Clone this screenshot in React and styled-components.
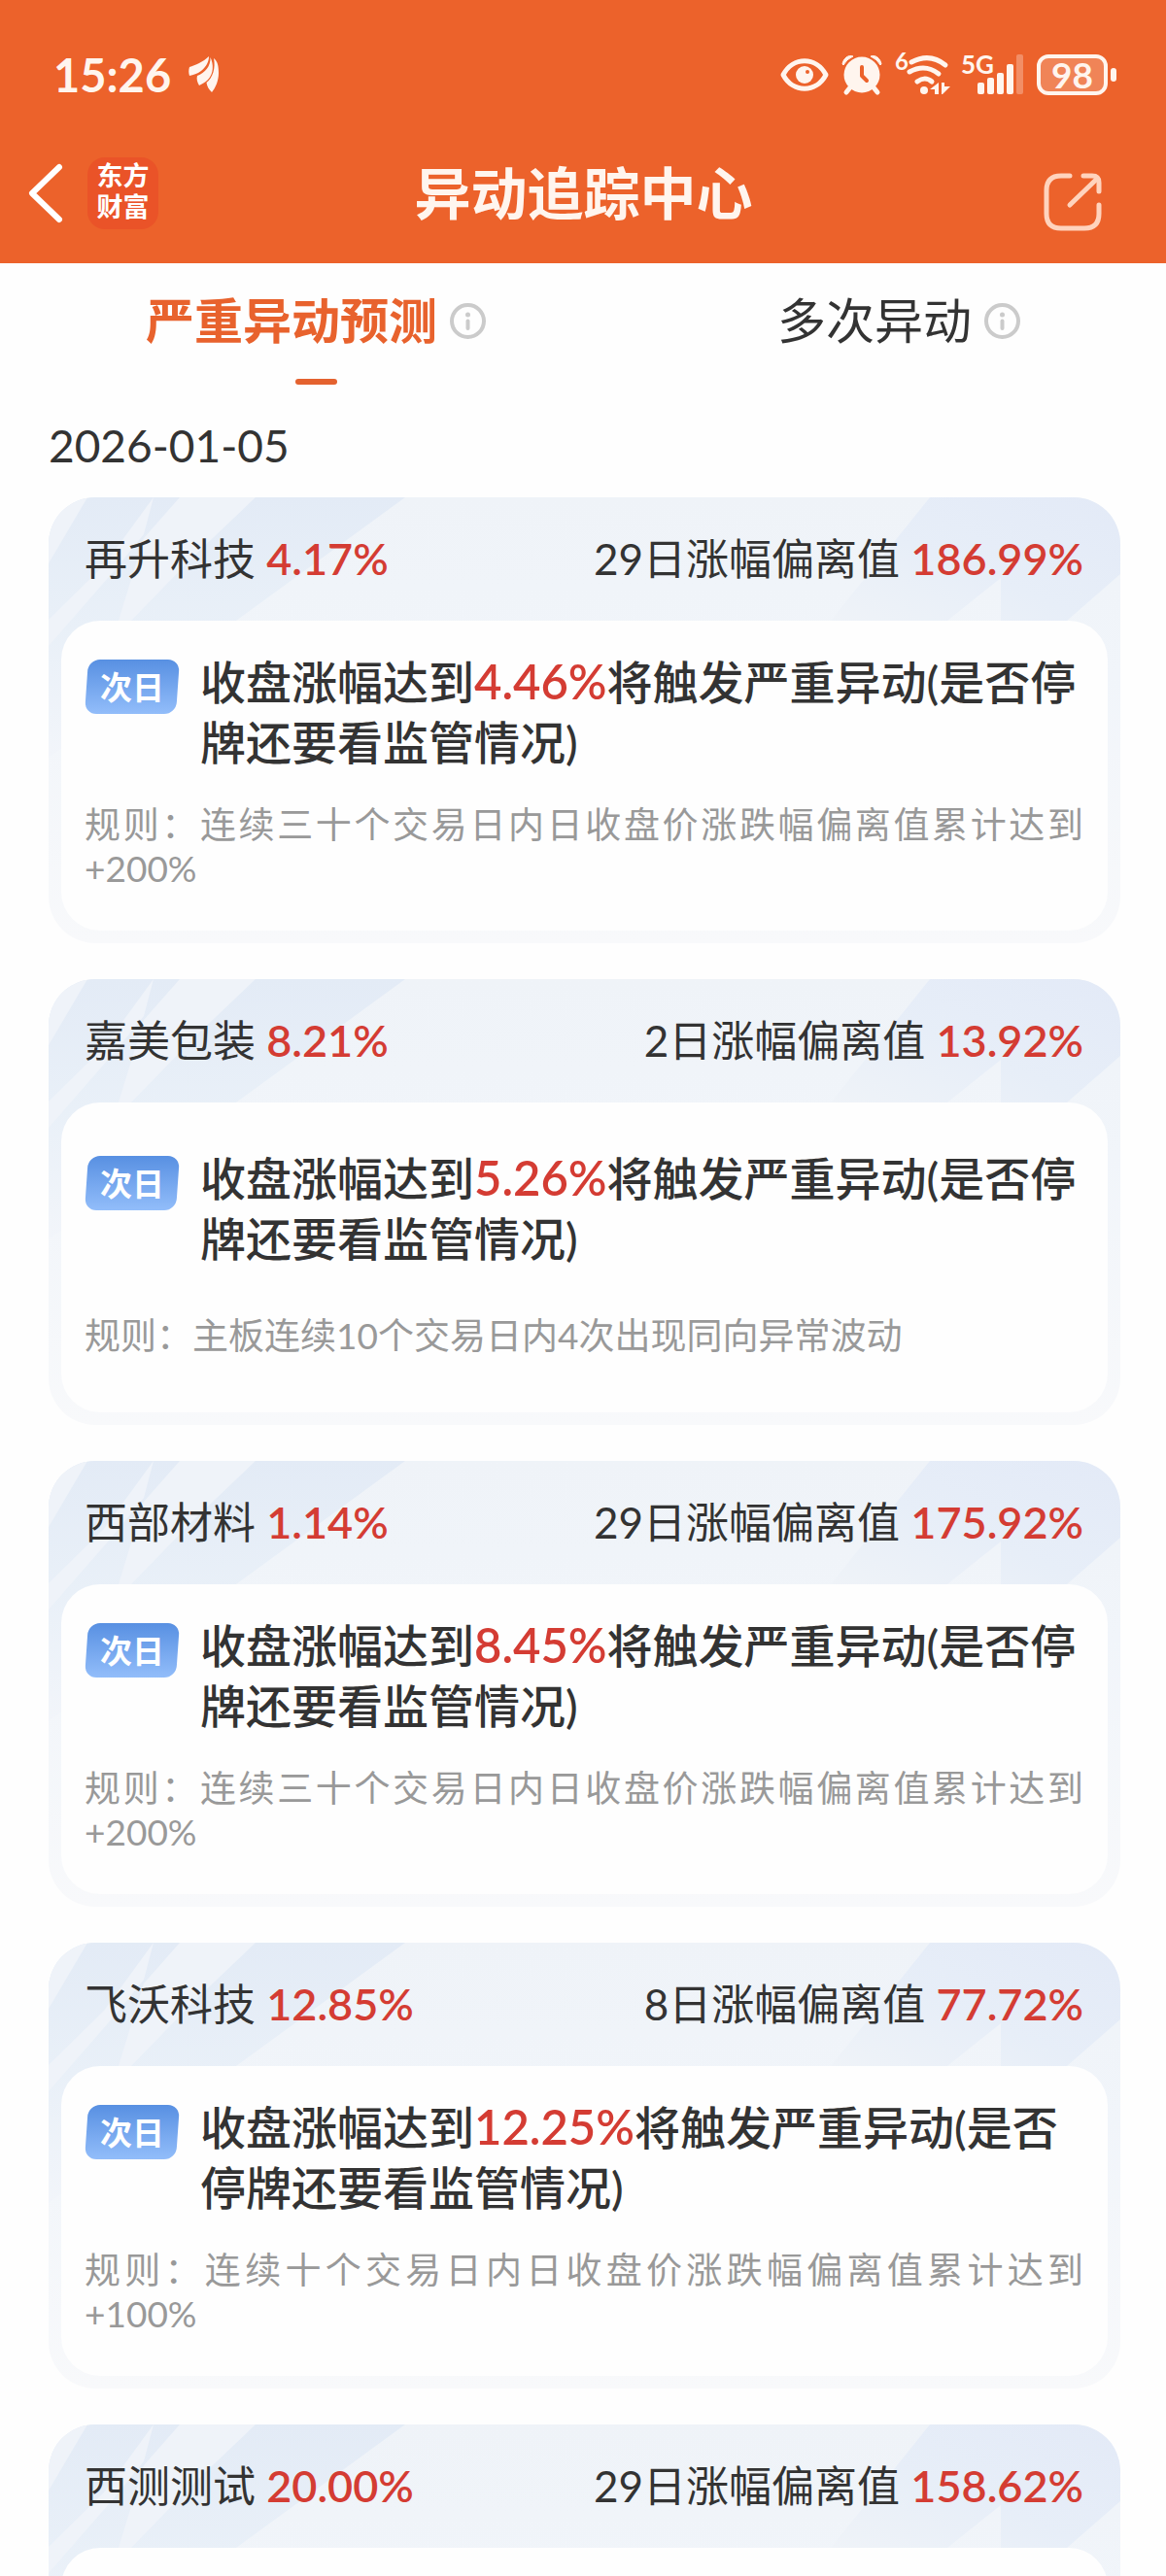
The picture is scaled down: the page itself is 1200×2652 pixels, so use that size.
import styled, { createGlobalStyle } from 'styled-components';

const stocks = [
  {
    name: '再升科技',
    change: '4.17%',
    days: '29日涨幅偏离值',
    deviation: '186.99%',
    trigger: '4.46%',
    rule: '规则：连续三十个交易日内日收盘价涨跌幅偏离值累计达到+200%',
  },
  {
    name: '嘉美包装',
    change: '8.21%',
    days: '2日涨幅偏离值',
    deviation: '13.92%',
    trigger: '5.26%',
    rule: '规则：主板连续10个交易日内4次出现同向异常波动',
  },
  {
    name: '西部材料',
    change: '1.14%',
    days: '29日涨幅偏离值',
    deviation: '175.92%',
    trigger: '8.45%',
    rule: '规则：连续三十个交易日内日收盘价涨跌幅偏离值累计达到+200%',
  },
  {
    name: '飞沃科技',
    change: '12.85%',
    days: '8日涨幅偏离值',
    deviation: '77.72%',
    trigger: '12.25%',
    rule: '规则：连续十个交易日内日收盘价涨跌幅偏离值累计达到+100%',
  },
  {
    name: '西测测试',
    change: '20.00%',
    days: '29日涨幅偏离值',
    deviation: '158.62%',
  },
];

export default function App() {
  return (
    <Page>
      <GlobalStyle />
      <Header>
        <StatusBar />
        <NavBar>
          <NavSide>
            <IconButton aria-label="返回">
              <BackIcon />
            </IconButton>
            <Brand>
              东方
              <br />
              财富
            </Brand>
          </NavSide>
          <Title>异动追踪中心</Title>
          <NavSide $end>
            <IconButton aria-label="分享">
              <ShareIcon />
            </IconButton>
          </NavSide>
        </NavBar>
      </Header>
      <Tabs>
        <Tab $active>
          <TabLabel>
            严重异动预测
            <InfoIcon />
          </TabLabel>
          <TabBar $active />
        </Tab>
        <Tab>
          <TabLabel>
            多次异动
            <InfoIcon />
          </TabLabel>
          <TabBar />
        </Tab>
      </Tabs>
      <DateRow>2026-01-05</DateRow>
      <List>
        {stocks.map((stock) => (
          <StockCard key={stock.name} stock={stock} />
        ))}
      </List>
    </Page>
  );
}

function StatusBar() {
  return (
    <StatusRow>
      <StatusGroup $gap={18}>
        <Clock>15:26</Clock>
        <LeafIcon />
      </StatusGroup>
      <StatusGroup $gap={13}>
        <EyeIcon />
        <AlarmIcon />
        <WifiIcon />
        <SignalIcon />
        <Battery>
          <BatteryBody>98</BatteryBody>
          <BatteryTip />
        </Battery>
      </StatusGroup>
    </StatusRow>
  );
}

function StockCard({ stock }) {
  return (
    <Card>
      <CardPattern />
      <CardHead>
        <span>
          {stock.name} <Value>{stock.change}</Value>
        </span>
        <span>
          {stock.days} <Value>{stock.deviation}</Value>
        </span>
      </CardHead>
      <CardBody>
        {stock.trigger && (
          <>
            <Message>
              <Badge>次日</Badge>
              <MessageText>
                收盘涨幅达到<Value $large>{stock.trigger}</Value>
                将触发严重异动(是否停牌还要看监管情况)
              </MessageText>
            </Message>
            <Rule>{stock.rule}</Rule>
          </>
        )}
      </CardBody>
    </Card>
  );
}

// Slanted stripes behind the head of a card
function CardPattern() {
  return (
    <Pattern viewBox="0 0 1103 268" preserveAspectRatio="none" aria-hidden="true">
      <defs>
        <linearGradient id="stripe" x1="0" y1="0" x2="0" y2="1">
          <stop offset="0" stopColor="#e3ebf6" />
          <stop offset="0.5" stopColor="#e9f0f8" />
          <stop offset="1" stopColor="#f2f5fa" />
        </linearGradient>
        <linearGradient id="wing" x1="0" y1="1" x2="1" y2="0">
          <stop offset="0" stopColor="#eff3f8" />
          <stop offset="0.45" stopColor="#e7eef8" />
          <stop offset="1" stopColor="#e3eaf7" />
        </linearGradient>
      </defs>
      <path d="M0 0H367L193 127L0 268Z" fill="url(#stripe)" />
      <g fill="#eff3f9">
        <path d="M0 0H40L0 68Z" />
        <path d="M108 0L98 38L68 75L0 153V126L57 70Z" />
        <path d="M135 0H213L150 60L85 127H72L98 42Z" />
      </g>
      <path d="M907 0H1103V79L1048 127H980V83L925 127H805Z" fill="url(#wing)" />
    </Pattern>
  );
}

function BackIcon() {
  return (
    <svg width="35" height="60" viewBox="0 0 35 60" fill="none">
      <path d="M32 3L4 30L32 57" stroke="#fff" strokeWidth="6" strokeLinecap="round" strokeLinejoin="round" />
    </svg>
  );
}

function ShareIcon() {
  return (
    <svg width="60" height="60" viewBox="0 0 60 60" fill="none">
      <g stroke="#ffd3bd" strokeWidth="5" strokeLinecap="round" strokeLinejoin="round">
        <path d="M27 3H18Q3 3 3 18V42Q3 57 18 57H42Q57 57 57 42V33" />
        <path d="M41 3H50Q57 3 57 10V19" />
        <path d="M27 33L55 6" />
      </g>
    </svg>
  );
}

function InfoIcon() {
  return (
    <svg width="37" height="37" viewBox="0 0 37 37" fill="none">
      <circle cx="18.5" cy="18.5" r="16.5" stroke="#cbcbcb" strokeWidth="4" />
      <circle cx="18.5" cy="12" r="2.5" fill="#cbcbcb" />
      <path d="M18.5 18.5V26" stroke="#cbcbcb" strokeWidth="4" strokeLinecap="round" />
    </svg>
  );
}

function LeafIcon() {
  return (
    <svg width="32" height="38" viewBox="0 0 32 38" fill="#fff5ee">
      <path d="M21 0C15 6 7 9 1 11C0 14 0 17 1 20C5 19 9 18 13 15C18 11 21 6 21 0Z" />
      <path d="M22.500 1C23 10 17 17 9 20C8 23 9 27 11 30C14 28 17 27 20 24C26 18 26 8 22.500 1Z" />
      <path d="M26 2C30 5 31 10 31 17C31 25 28 32 24 37C21 34 19 31 18.500 27C25 22 28 12 26 2Z" />
    </svg>
  );
}

function EyeIcon() {
  return (
    <svg width="50" height="42" viewBox="0 0 50 42" fill="none">
      <path d="M3 21C13 2 37 2 47 21C37 40 13 40 3 21Z" stroke="#fff5ee" strokeWidth="5" strokeLinejoin="round" />
      <circle cx="25" cy="21" r="9" fill="#fff5ee" />
      <circle cx="28" cy="18" r="2" fill="#ec622b" />
    </svg>
  );
}

function AlarmIcon() {
  return (
    <svg width="42" height="42" viewBox="0 0 42 42" fill="none">
      <g stroke="#fff5ee" strokeWidth="5" strokeLinecap="round">
        <path d="M9 34L5 39M33 34L37 39" />
      </g>
      <path d="M1 10C2 4 7 0 12 2Q5 5 2 11ZM41 10C40 4 35 0 30 2Q37 5 40 11Z" fill="#fff5ee" stroke="#fff5ee" />
      <circle cx="21" cy="21" r="18.500" fill="#fff5ee" />
      <path d="M21 13V22L26 27" stroke="#ec622b" strokeWidth="4" strokeLinecap="round" strokeLinejoin="round" />
    </svg>
  );
}

function WifiIcon() {
  return (
    <svg width="57" height="46" viewBox="0 0 57 46" fill="none">
      <text x="0" y="18" fill="#fff5ee" fontSize="24" fontWeight="700">
        6
      </text>
      <g stroke="#fff5ee" strokeWidth="5" strokeLinecap="round">
        <path d="M17 10Q36 0 52 13" />
        <path d="M15 20Q31 11 45 22" />
        <path d="M23 30Q31 24 38 30" />
      </g>
      <circle cx="30" cy="39" r="4" fill="#fff5ee" />
      <path d="M45 31V43H41V38H36ZM48 31H51V35H57L49 43H48Z" fill="#fff5ee" />
    </svg>
  );
}

function SignalIcon() {
  return (
    <svg width="63" height="42" viewBox="0 0 63 42">
      <text x="-2" y="20" fill="#fff5ee" fontSize="26" fontWeight="700">
        5G
      </text>
      <g fill="#fff5ee">
        <rect x="15" y="29" width="7" height="12" rx="2" />
        <rect x="25" y="24" width="7" height="17" rx="2" />
        <rect x="35" y="19" width="7" height="22" rx="2" />
        <rect x="45" y="10" width="7" height="31" rx="2" />
        <rect x="55" y="0" width="7" height="41" rx="2" opacity="0.3" />
      </g>
    </svg>
  );
}

const GlobalStyle = createGlobalStyle`
  * {
    box-sizing: border-box;
  }
  body {
    margin: 0;
    background: #fefefe;
    color: #333;
    font-family: Lato, 'Noto Sans CJK SC', sans-serif;
  }
  button {
    padding: 0;
    border: 0;
    background: none;
    color: inherit;
    font: inherit;
    cursor: pointer;
  }
  svg {
    display: block;
    flex-shrink: 0;
    overflow: visible;
  }
`;

const Page = styled.div`
  height: 100vh;
  overflow: hidden;
`;

const Header = styled.header`
  padding: 47px 0 30px;
  background: #ec622b;
  color: #fff5ee;
`;

const StatusRow = styled.div`
  display: flex;
  justify-content: space-between;
  align-items: center;
  height: 60px;
  padding: 0 51px 0 55px;
`;

const StatusGroup = styled.div`
  display: flex;
  align-items: center;
  gap: ${(props) => props.$gap}px;
`;

const Clock = styled.span`
  font-size: 47px;
  font-weight: 700;
  line-height: 60px;
`;

const Battery = styled.div`
  display: flex;
  align-items: center;
  gap: 3px;
`;

const BatteryBody = styled.span`
  width: 73px;
  height: 42px;
  border: 4px solid #fff5ee;
  border-radius: 12px;
  background: #f08457;
  font-size: 37px;
  font-weight: 700;
  line-height: 34px;
  text-align: center;
`;

const BatteryTip = styled.span`
  width: 6px;
  height: 14px;
  border-radius: 3px;
  background: #fff5ee;
`;

const NavBar = styled.div`
  display: grid;
  grid-template-columns: 1fr auto 1fr;
  align-items: center;
  height: 84px;
  margin-top: 50px;
  padding: 0 66px 0 29px;
`;

const NavSide = styled.div`
  display: flex;
  align-items: center;
  gap: 26px;
  justify-content: ${(props) => (props.$end ? 'flex-end' : 'flex-start')};
  padding-top: ${(props) => (props.$end ? '18px' : '0')};
`;

const IconButton = styled.button`
  display: block;
`;

const Brand = styled.span`
  width: 73px;
  height: 74px;
  padding-top: 3px;
  border-radius: 18px;
  background: #ea5328;
  color: #fff;
  font-size: 27px;
  font-weight: 700;
  line-height: 32px;
  text-align: center;
`;

const Title = styled.h1`
  margin: 0;
  padding-left: 38px;
  font-size: 58px;
  font-weight: 700;
  line-height: 84px;
`;

const Tabs = styled.nav`
  display: flex;
  justify-content: space-around;
  padding-top: 29px;
`;

const Tab = styled.button`
  display: flex;
  flex-direction: column;
  align-items: center;
  gap: 30px;
  && {
    color: ${(props) => (props.$active ? '#e8622d' : '#333')};
    font-size: 50px;
    font-weight: ${(props) => (props.$active ? 700 : 400)};
    line-height: 60px;
  }
`;

const TabLabel = styled.span`
  display: flex;
  align-items: center;
  gap: 13px;
`;

const TabBar = styled.span`
  width: 43px;
  height: 6px;
  border-radius: 3px;
  background: ${(props) => (props.$active ? '#e4622f' : 'transparent')};
`;

const DateRow = styled.div`
  padding: 33px 50px 23px;
  font-size: 46px;
  line-height: 60px;
`;

const List = styled.main`
  display: flex;
  flex-direction: column;
  gap: 37px;
  padding: 0 47px 0 50px;
`;

const Card = styled.section`
  position: relative;
  overflow: hidden;
  flex-shrink: 0;
  padding: 0 13px 13px;
  border-radius: 48px;
  background: linear-gradient(#eff3f8, #f1f5fa 40%, #f8f9fb);
`;

const Pattern = styled.svg`
  position: absolute;
  top: 0;
  left: 0;
  width: 100%;
  height: 268px;
`;

const CardHead = styled.div`
  position: relative;
  display: flex;
  justify-content: space-between;
  padding: 0 25px 0 24px;
  font-size: 44px;
  line-height: 127px;
`;

const Value = styled.strong`
  color: #d43c33;
  font-size: ${(props) => (props.$large ? 49 : 45)}px;
  font-weight: 600;
  line-height: 1;
`;

const CardBody = styled.div`
  position: relative;
  display: flex;
  flex-direction: column;
  justify-content: space-evenly;
  min-height: 319px;
  padding: 0 25px 10px 24px;
  border-radius: 40px;
  background: #fefefe;
`;

const Message = styled.div`
  display: flex;
  align-items: flex-start;
  gap: 21px;
`;

const Badge = styled.span`
  position: relative;
  z-index: 0;
  flex-shrink: 0;
  width: 98px;
  height: 56px;
  margin-top: 8px;
  color: #fff;
  font-size: 33px;
  font-weight: 700;
  line-height: 56px;
  text-align: center;

  &::before {
    content: '';
    position: absolute;
    z-index: -1;
    inset: 0 2px;
    border-radius: 12px;
    background: linear-gradient(#5890e2, #92bdfa);
    transform: skewX(-4deg);
  }
`;

const MessageText = styled.p`
  margin: 0;
  font-size: 47px;
  font-weight: 500;
  line-height: 62px;
`;

const Rule = styled.p`
  margin: 0;
  color: #999;
  font-size: 37px;
  line-height: 45px;
  text-align: justify;
`;
